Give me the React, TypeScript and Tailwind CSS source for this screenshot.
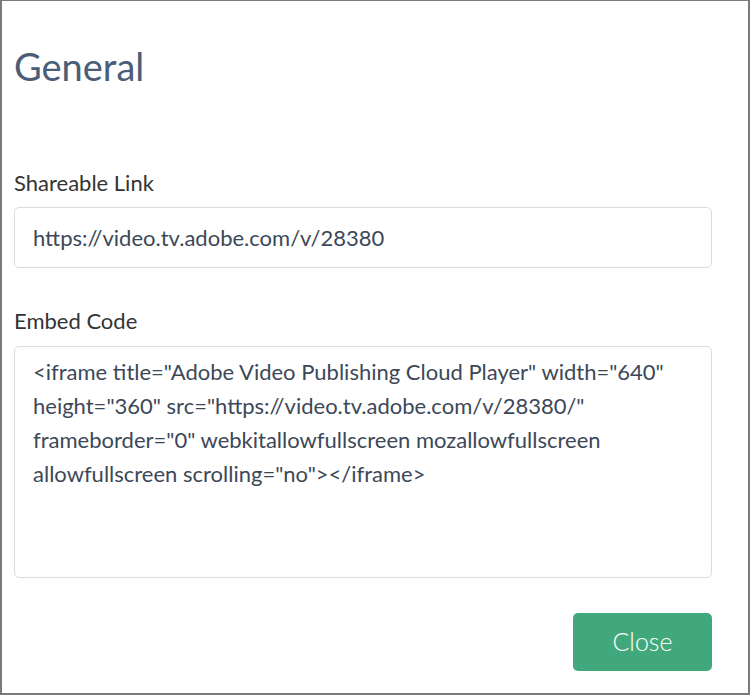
export default function App() {
  const embed = `<iframe title="Adobe Video Publishing Cloud Player" width="640"
height="360" src="https://video.tv.adobe.com/v/28380/"
frameborder="0" webkitallowfullscreen mozallowfullscreen
allowfullscreen scrolling="no"></iframe>`

  return (
    <div className="w-[750px] h-[695px] bg-white border-t border-l-2 border-r-2 border-b-2 border-[#7a7a7a] font-['Lato',sans-serif] overflow-hidden">
      <div className="pl-[12px] pr-[36px]">
        <h1 className="pt-[39px] text-[38px] leading-[52px] text-[#4a5e77]">General</h1>

        <div className="mt-[76px]">
          <label className="block text-[22px] leading-[30px] text-[#333]">Shareable Link</label>
          <div className="mt-[9px] h-[61px] border border-[#dcdcdc] rounded-[5px] flex items-center px-[18px] text-[22px] text-[#3c4858]">
            https://video.tv.adobe.com/v/28380
          </div>
        </div>

        <div className="mt-[38px]">
          <label className="block text-[22px] leading-[30px] text-[#333]">Embed Code</label>
          <div className="mt-[10px] h-[232px] border border-[#dcdcdc] rounded-[5px] px-[18px] pt-[8px] text-[22px] leading-[34px] text-[#3c4858] whitespace-pre-line">
            {embed}
          </div>
        </div>

        <div className="mt-[35px] flex justify-end">
          <button className="w-[139px] h-[58px] rounded-[5px] bg-[#41a87b] text-white text-[25px] font-light">
            Close
          </button>
        </div>
      </div>
    </div>
  )
}
